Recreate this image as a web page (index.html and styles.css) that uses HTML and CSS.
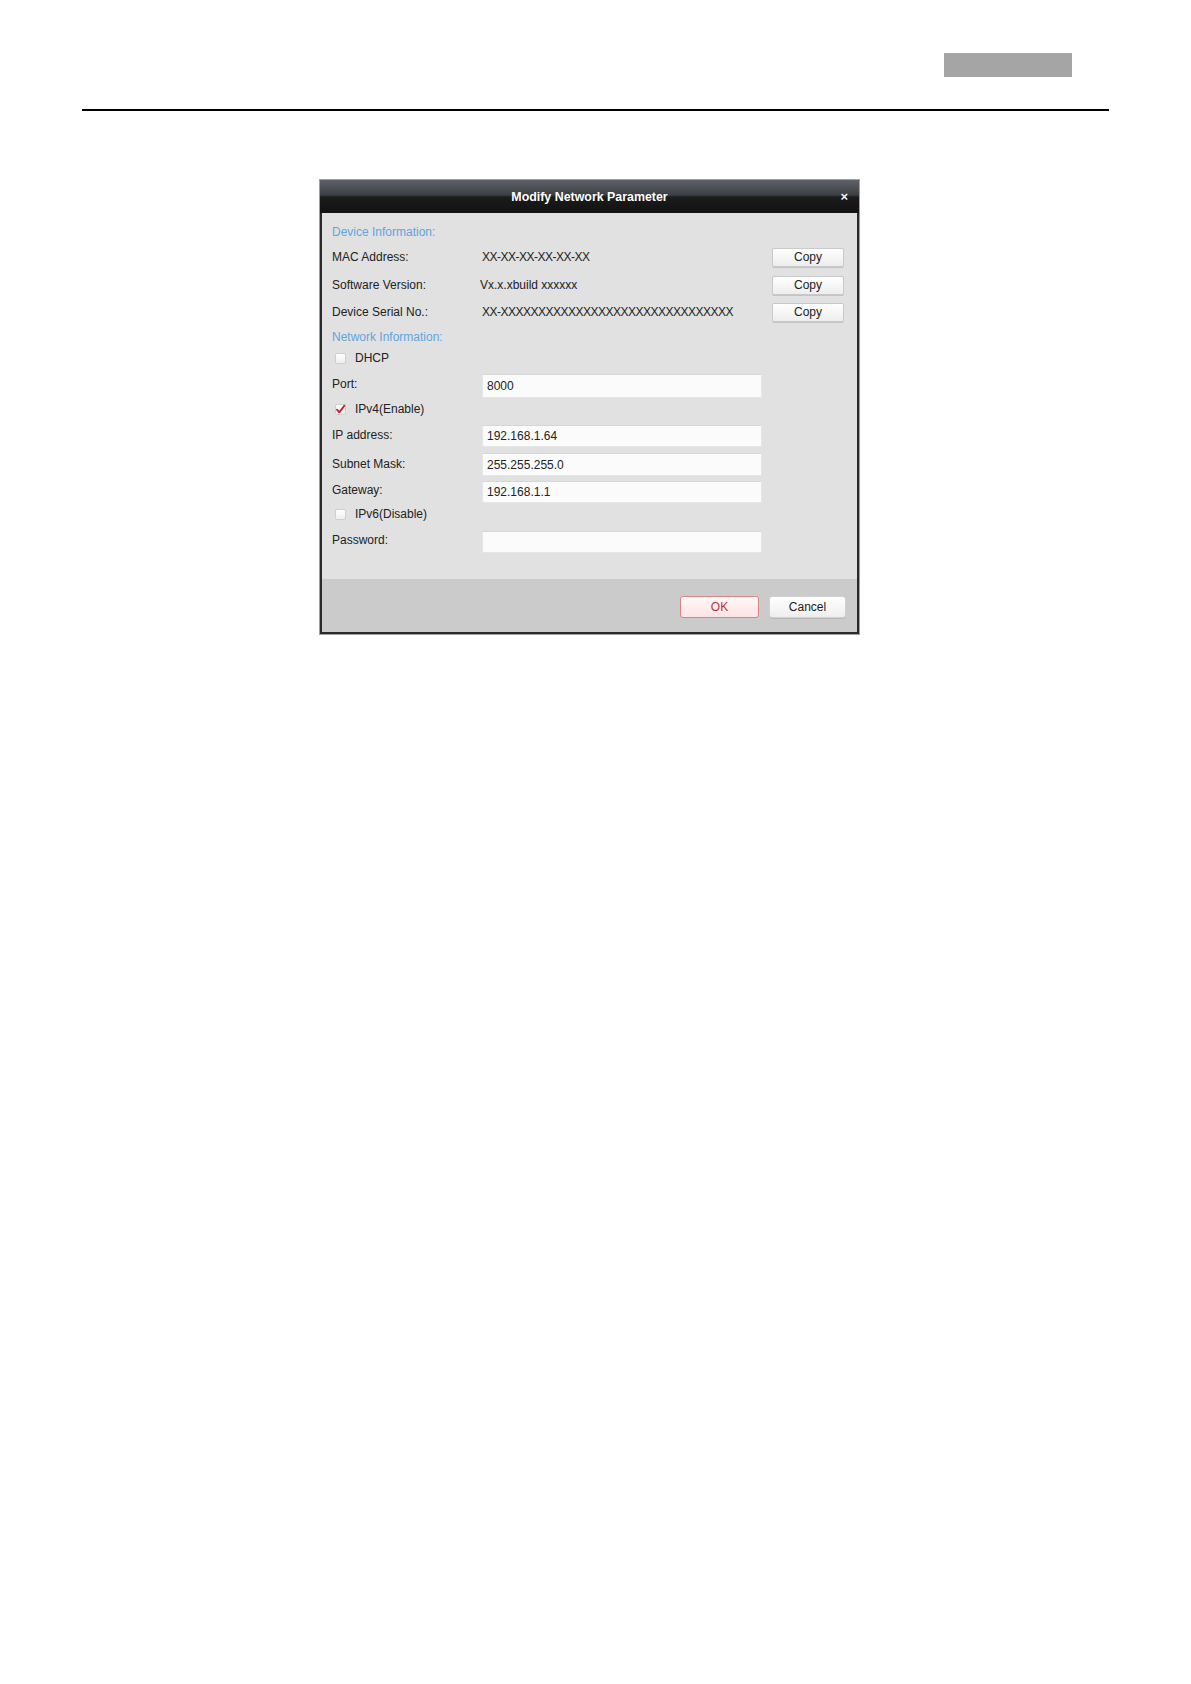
FILE: index.html
```html
<!DOCTYPE html>
<html>
<head>
<meta charset="utf-8">
<link rel="stylesheet" href="styles.css">
</head>
<body>
<div class="page">
  <div class="header">
    <div class="header-tab"></div>
  </div>
  <div class="rule"></div>

  <div class="dialog">
    <div class="titlebar">
      <span></span>
      <span class="title">Modify Network Parameter</span>
      <span class="close">×</span>
    </div>
    <div class="dialog-body">
      <div class="row h20 section">Device Information:</div>
      <div class="row h20 m5">
        <span class="label">MAC Address:</span>
        <span class="value xs">XX-XX-XX-XX-XX-XX</span>
        <button class="btn copy">Copy</button>
      </div>
      <div class="row h20 m8">
        <span class="label">Software Version:</span>
        <span class="value shift">Vx.x.xbuild xxxxxx</span>
        <button class="btn copy">Copy</button>
      </div>
      <div class="row h20 m7">
        <span class="label">Device Serial No.:</span>
        <span class="value xs">XX-XXXXXXXXXXXXXXXXXXXXXXXXXXXXXXX</span>
        <button class="btn copy">Copy</button>
      </div>
      <div class="row h16 m7 section">Network Information:</div>
      <div class="row h16 m5">
        <span class="check"></span>
        <span class="check-label">DHCP</span>
      </div>
      <div class="row h24 m8">
        <span class="label up2">Port:</span>
        <span class="field">8000</span>
      </div>
      <div class="row h16 m3">
        <span class="check">
          <svg width="11" height="11" viewBox="0 0 11 11"><path d="M2 5.6 L4.3 8.4 L9.4 1.6" fill="none" stroke="#c8202a" stroke-width="1.8" stroke-linecap="round" stroke-linejoin="round"/></svg>
        </span>
        <span class="check-label">IPv4(Enable)</span>
      </div>
      <div class="row h22 m8">
        <span class="label up">IP address:</span>
        <span class="field">192.168.1.64</span>
      </div>
      <div class="row h23 m6">
        <span class="label up">Subnet Mask:</span>
        <span class="field">255.255.255.0</span>
      </div>
      <div class="row h22 m5">
        <span class="label up2">Gateway:</span>
        <span class="field">192.168.1.1</span>
      </div>
      <div class="row h16 m3">
        <span class="check"></span>
        <span class="check-label">IPv6(Disable)</span>
      </div>
      <div class="row h22 m9">
        <span class="label up2">Password:</span>
        <span class="field"></span>
      </div>
    </div>
    <div class="dialog-footer">
      <button class="btn ok">OK</button>
      <button class="btn cancel">Cancel</button>
    </div>
  </div>
</div>
</body>
</html>
```

FILE: styles.css
```css
html, body {
  margin: 0;
  padding: 0;
  background: #ffffff;
}

body {
  font-family: "Liberation Sans", Arial, sans-serif;
  color: #222;
}

.page {
  width: 1191px;
  min-height: 1684px;
}

.header {
  display: flex;
  justify-content: flex-end;
  padding: 53px 119px 0 0;
}

.header-tab {
  width: 128px;
  height: 24px;
  background: #a5a5a5;
}

.rule {
  margin: 32px 82px 0 82px;
  height: 2px;
  background: #000;
}

.dialog {
  box-sizing: border-box;
  width: 539px;
  margin: 69px 0 0 320px;
  border: 2px solid #2a2a2a;
  border-top: 0;
  box-shadow: 0 0 0 1px #a0a0a0;
  background: #e1e1e1;
}

.titlebar {
  display: grid;
  grid-template-columns: 1fr auto 1fr;
  align-items: center;
  height: 33px;
  margin: 0 -2px;
  padding: 0 11px;
  background: linear-gradient(#5e6269 0%, #3c3f44 45%, #1b1b1b 52%, #121212 100%);
  color: #fff;
}

.title {
  font-weight: bold;
  font-size: 12.4px;
}

.close {
  justify-self: end;
  font-weight: bold;
  font-size: 13px;
  line-height: 13px;
  color: #f2f2f2;
}

.dialog-body {
  display: flex;
  flex-direction: column;
  padding: 9px 13px 26px 10px;
}

.row {
  display: flex;
  align-items: center;
  font-size: 12px;
}

.h16 { height: 16px; }
.h20 { height: 20px; }
.h22 { height: 22px; }
.h23 { height: 23px; }
.h24 { height: 24px; }

.m3 { margin-top: 3px; }
.m4 { margin-top: 4px; }
.m5 { margin-top: 5px; }
.m6 { margin-top: 6px; }
.m7 { margin-top: 7px; }
.m8 { margin-top: 8px; }
.m9 { margin-top: 9px; }

.section {
  color: #62a4dc;
}

.label {
  width: 150px;
  flex: none;
}

.label.up {
  position: relative;
  top: -1px;
}

.label.up2 {
  position: relative;
  top: -2px;
}

.value {
  flex: 1;
  white-space: nowrap;
}

.value.shift {
  margin-left: -2px;
}

.xs {
  letter-spacing: -0.5px;
}

.btn {
  box-sizing: border-box;
  font-family: "Liberation Sans", Arial, sans-serif;
  font-size: 12px;
  color: #222;
  padding: 0;
  cursor: default;
}

.copy {
  width: 72px;
  height: 19px;
  border: 1px solid #c9c9c9;
  border-radius: 2px;
  background: linear-gradient(#ffffff, #ededed);
  box-shadow: 0 1px 0 #c4c4c4;
}

.field {
  box-sizing: border-box;
  width: 280px;
  height: 100%;
  display: flex;
  align-items: center;
  padding-left: 4px;
  background: #fbfbfb;
  border: 1px solid #e6e6e6;
  border-top-color: #d6d6d6;
  font-size: 12px;
}

.check {
  box-sizing: border-box;
  width: 11px;
  height: 11px;
  margin-left: 3px;
  border: 1px solid #cfcfcf;
  border-radius: 2px;
  background: linear-gradient(#ffffff, #eeeeee);
  display: flex;
  align-items: center;
  justify-content: center;
  overflow: visible;
}

.check svg {
  flex: none;
}

.check-label {
  margin-left: 9px;
}

.dialog-footer {
  display: flex;
  justify-content: flex-end;
  gap: 10px;
  height: 53px;
  box-sizing: border-box;
  padding: 17px 11px 0 0;
  background: #cbcbcb;
}

.ok, .cancel {
  height: 22px;
  border-radius: 3px;
}

.ok {
  width: 79px;
  border: 1px solid #d98585;
  background: linear-gradient(#fff7f7, #fbe4e4);
  color: #c0303a;
}

.cancel {
  width: 77px;
  border: 1px solid #d0d0d0;
  background: linear-gradient(#ffffff, #eeeeee);
  box-shadow: 0 1px 0 #b8b8b8;
}
```
